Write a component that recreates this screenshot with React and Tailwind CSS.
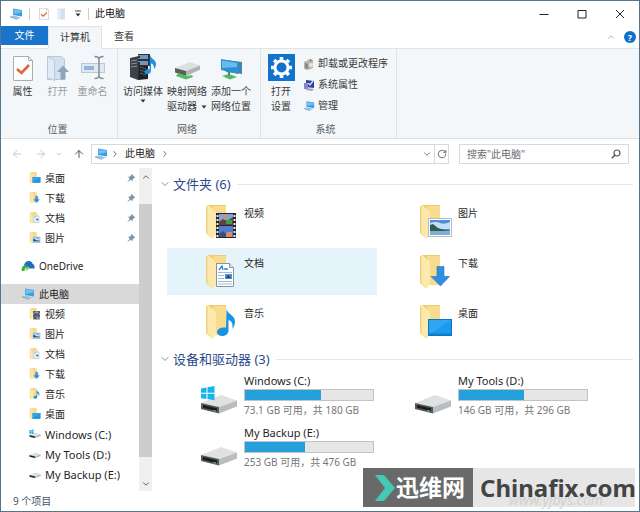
import React, { useState } from "react";
import { ArrowLeft, ArrowRight, ArrowUp, ChevronDown, ChevronRight, ChevronUp, RotateCw } from "lucide-react";

const folders = [
  { name: "视频", kind: "video" },
  { name: "图片", kind: "picture" },
  { name: "文档", kind: "document" },
  { name: "下载", kind: "download" },
  { name: "音乐", kind: "music" },
  { name: "桌面", kind: "desktop" },
];

const drives = [
  { name: "Windows (C:)", free: 73.1, total: 180, system: true },
  { name: "My Tools (D:)", free: 146, total: 296 },
  { name: "My Backup (E:)", free: 253, total: 476 },
];

const pinned = [
  { name: "桌面", kind: "desktop" },
  { name: "下载", kind: "download" },
  { name: "文档", kind: "document" },
  { name: "图片", kind: "picture" },
];

const treeFolders = [
  { name: "视频", kind: "video" },
  { name: "图片", kind: "picture" },
  { name: "文档", kind: "document" },
  { name: "下载", kind: "download" },
  { name: "音乐", kind: "music" },
  { name: "桌面", kind: "desktop" },
];

// what lies in front of the folder, bottom right
const Overlay = ({ kind }) => {
  if (kind === "video") {
    return (
      <g>
        <rect x="11" y="9" width="20" height="25" fill="#23262b" />
        <rect x="14" y="10" width="14" height="11" fill="#7fa2e0" />
        <rect x="14" y="22" width="14" height="11" fill="#4f7dd6" />
        <path d="M14 18l4-3 4 2 6-4v8H14z" fill="#6a3f35" />
        <path d="M21 16h6v4h-6z" fill="#3da043" />
        <path d="M18 11h4v3h-4zM22 28h5v5h-7z" fill="#e58a58" />
        <path d="M14 30l4-3 3 3v3h-7z" fill="#3c4f6f" />
        <path
          d="M11.500 11h2v2h-2zM11.500 15h2v2h-2zM11.500 19h2v2h-2zM11.500 23h2v2h-2zM11.500 27h2v2h-2zM11.500 31h2v2h-2zM28.500 11h2v2h-2zM28.500 15h2v2h-2zM28.500 19h2v2h-2zM28.500 23h2v2h-2zM28.500 27h2v2h-2zM28.500 31h2v2h-2z"
          fill="#e8eaec"
        />
      </g>
    );
  }
  if (kind === "picture") {
    return (
      <g>
        <rect x="9.500" y="14.500" width="23" height="18" fill="#fff" stroke="#b4bdc5" />
        <rect x="11" y="16" width="20" height="15" fill="#4d8fd6" />
        <path d="M11 19q6-2 10 0t10-1v7H11z" fill="#c4dff5" />
        <path d="M11 21l3-1 5 4 6 2 6 1v1H11z" fill="#2d5f50" />
        <path d="M11 27h20v4H11z" fill="#7fb0d0" />
      </g>
    );
  }
  if (kind === "document") {
    return (
      <g>
        <path d="M11.500 9.500h13l4 4v19h-17z" fill="#fff" stroke="#8d9399" />
        <path d="M24.500 9.500v4h4" fill="#e5e8ea" stroke="#8d9399" />
        <path d="M14 16l3-4 1 4M19 15h4" stroke="#2a83cf" strokeWidth="1.300" fill="none" />
        <path d="M13 18.500h14M13 21.500h6M13 24.500h6M13 27.500h14M13 30h14" stroke="#9cb9d6" />
        <path d="M20 20h7v5h-7z" fill="#4791cf" />
        <path d="M21 24l2-3 3 3z" fill="#23405c" />
      </g>
    );
  }
  if (kind === "download") {
    return <path d="M18 12.500h7v10h5.500L21.500 32 12 22.500h6z" fill="#2f8fe0" stroke="#2377c2" strokeWidth=".6" />;
  }
  if (kind === "music") {
    return (
      <path
        d="M21.500 5c1 5 8 6 8.500 12 0 3-1 6-2.500 8 .5-5-.5-8-4-9v10.500c0 4-3.500 5.500-6.500 5.500-3 0-5-1.700-5-4 0-3 4-5 9-4.500z"
        fill="#1c93de"
      />
    );
  }
  return (
    <g>
      <rect x="9.500" y="15.500" width="23" height="16" fill="#1b9bee" stroke="#0f76bd" />
      <path d="M10 16h22L14 28l-4 2z" fill="#45b2f5" opacity=".5" />
      <path d="M10 29.500h22v1.500H10z" fill="#0e7fd0" />
    </g>
  );
};

const FolderIcon = ({ kind, className }) => (
  <svg viewBox="0 0 33 36" className={className} aria-hidden="true">
    <path d="M3 1h18v30H7z" fill="#eecb6d" />
    <path d="M8 2h13v29H8z" fill="#f6dc8c" />
    <path d="M1 2l2-1 6 5q2 2 2 4v20l-3.500 5L1 29z" fill="#fce9ab" />
    <path d="M1 2l1.500 1v26.500L7.500 35 1 29z" fill="#f0d284" />
    <Overlay kind={kind} />
  </svg>
);

const DriveIcon = ({ system, className }) => (
  <svg viewBox="0 0 38 32" className={className} aria-hidden="true">
    <path d="M1 19l20-8 16 5.500L19 23z" fill="#dfe1e2" />
    <path d="M1 19l18 4v6.500L1 25z" fill="#55595b" />
    <path d="M3 21l14 3.200v3L3 23.700z" fill="#191d1c" />
    <path d="M19 23l18-6.500v6L19 29.500z" fill="#b9bdbf" />
    <path d="M13 26.500l3 .7" stroke="#3fc46b" strokeWidth="1.200" />
    {system && (
      <path d="M1 4.500l5.500-1v5.200H1zM7.500 3.300l7-1.300v6.700h-7zM1 9.700h5.500V15L1 14.200zM7.500 9.700h7v6.500l-7-1.100z" fill="#19b5ea" />
    )}
  </svg>
);

const PcIcon = ({ className }) => (
  <svg viewBox="0 0 14 12" className={className} aria-hidden="true">
    <path d="M4 .5l9 1.500v6.500L4 7z" fill="#3c9fe0" />
    <path d="M4.500 1.200l8 1.300v2L4.500 6z" fill="#6fc1f2" />
    <path d="M1 8.500l4-1 7 2-4 1.800z" fill="#9fc4dd" />
    <path d="M1 8.500l7 2.800v.5L1 9.200z" fill="#4c88ae" />
  </svg>
);

const CloudIcon = ({ className }) => (
  <svg viewBox="0 0 14 12" className={className} aria-hidden="true">
    <path d="M3 6.500C3 3 5.500.8 8 1c2 0 3.300 1.400 3.700 3C13 4.500 14 6 13.500 8.500H6z" fill="#1b6fc2" />
    <path d="M1 11c-1-3 .5-5.500 3-5.800C6 5 7 6 7.500 7L4 8.500 3.500 11z" fill="#35b24a" />
    <path d="M4.500 10.500c0-2.500 2-4 4-3.500l-2 3.500z" fill="#9fd45c" />
  </svg>
);

const PinIcon = () => (
  <svg viewBox="0 0 10 10" className="size-2.5" aria-hidden="true">
    <path d="M5.500 .8l3.700 3.700-1 .4L6.800 6.300l-.3 2-1.800-1.600L1 9.500l2.700-3.800L2 4l2-.4 1.300-1.600z" fill="#8195a3" />
  </svg>
);

const CheckPageIcon = ({ className }) => (
  <svg viewBox="0 0 20 25" className={className} aria-hidden="true">
    <path d="M.5.500h15l4 4v20H.5z" fill="#fdfdfd" stroke="#a7adb3" />
    <path d="M15.500.500v4h4" fill="none" stroke="#a7adb3" />
    <path d="M4 13l4.500 4L16 9" fill="none" stroke="#d9693b" strokeWidth="2.600" />
  </svg>
);

const OpenPageIcon = () => (
  <svg viewBox="0 0 24 26" className="h-[26px] w-6" aria-hidden="true">
    <path d="M1.500 1.500h14l3 3v20h-17z" fill="#d3e0f0" stroke="#b7c8de" />
    <path d="M1.500 1.500l7 4v20l-7-3z" fill="#e1eaf5" stroke="#b7c8de" />
    <path d="M17 10.500l6 6.500h-3.500v7.500h-5V17H11z" fill="#8fa3bd" />
  </svg>
);

const RenameIcon = () => (
  <svg viewBox="0 0 26 26" className="size-[26px]" aria-hidden="true">
    <rect x="1.500" y="8.500" width="23" height="9" fill="#dfe8f3" stroke="#b9c8da" />
    <path d="M4 11h10v4H4z" fill="#94b4d8" />
    <path d="M14.500 1.500q4.500 0 4.500 3v16q0 3-4.500 3M23.500 1.500q-4.500 0-4.500 3v16q0 3 4.500 3" fill="none" stroke="#7d8894" strokeWidth="1.400" />
  </svg>
);

const MediaIcon = () => (
  <svg viewBox="0 0 28 28" className="size-7" aria-hidden="true">
    <path d="M1 5l9-2 1 20-2 4-8-3z" fill="#3b4248" />
    <path d="M10 9l9 3v14l-10 1z" fill="#1d2226" />
    <path d="M9 1h12v12H9z" fill="#2c333b" />
    <path d="M11 2h8v4h-8zM11 8h8v4h-8z" fill="#7396bd" />
    <path d="M2 8l6-1M2 11l6-1M2 14l6-1" stroke="#86919b" />
    <path d="M11 14l6 2M11 17l6 2M11 20l6 2" stroke="#59646d" />
    <path d="M9.500 2.500h1M9.500 5.500h1M9.500 8.500h1" stroke="#dfe3e6" />
    <path d="M21 2c1 4 6 4.500 6 9 0 2-1 4-2 5 0-4-1-5-3-5.500v7c0 3-3 4-5 3.500-2-.6-2-4 1-4.500 1-.3 2 0 2.500 0z" fill="#2190df" />
  </svg>
);

const MapDriveIcon = () => (
  <svg viewBox="0 0 28 28" className="size-7" aria-hidden="true">
    <path d="M2 15l15-6 10 3.500-14 5.500z" fill="#dcdedf" />
    <path d="M2 15l11 3v5L2 19.500z" fill="#5a5f60" />
    <path d="M13 18l14-5.500v4.200L13 23z" fill="#aeb3b5" />
    <path d="M3 23l2-3 9 3 5-1 1 2-7 2.500z" fill="#58bb62" />
  </svg>
);

const NetPlaceIcon = () => (
  <svg viewBox="0 0 28 28" className="size-7" aria-hidden="true">
    <path d="M9 7l16 2v12L9 19z" fill="#3f86b4" />
    <path d="M4 6l17 3v12L4 17z" fill="#2e8fd2" />
    <path d="M5 7.500l15 2.500v4L5 15z" fill="#63bdf0" />
    <path d="M5 23l7-2 8 3-7 2.500z" fill="#57b862" />
    <path d="M12 19v3" stroke="#418d52" strokeWidth="2" />
  </svg>
);

const GearIcon = () => (
  <svg viewBox="0 0 27 27" className="size-[27px]" aria-hidden="true">
    <rect width="27" height="27" fill="#1273cc" />
    <circle cx="13.500" cy="13.500" r="6.500" fill="none" stroke="#fff" strokeWidth="3" />
    <g stroke="#fff" strokeWidth="3.600">
      <path d="M13.500 3v3.500M13.500 20.500V24M3 13.500h3.500M20.500 13.500H24" />
      <path d="M6.100 6.100l2.400 2.400M18.500 18.500l2.400 2.400M6.100 20.900l2.400-2.400M18.500 8.500l2.400-2.400" />
    </g>
  </svg>
);

const UninstallIcon = () => (
  <svg viewBox="0 0 12 12" className="size-3" aria-hidden="true">
    <path d="M1 4l6-3 3 1v8l-5 2-4-1z" fill="#b9b6ad" />
    <path d="M2 5l3 1v5l-3-1z" fill="#8a8880" />
    <circle cx="8" cy="7" r="2" fill="#e6e6e0" />
    <path d="M7 1l2 1-2 2z" fill="#6f8a68" />
  </svg>
);

const SystemIcon = () => (
  <svg viewBox="0 0 12 12" className="size-3" aria-hidden="true">
    <path d="M3 1l8 1v7L3 8z" fill="#2c3f9e" />
    <path d="M1 4h4v6H1z" fill="#8a86c4" />
    <path d="M5 4l2 2 3-4" stroke="#cfd8f5" strokeWidth="1.400" fill="none" />
    <path d="M4 9l7 1-2 2-6-1z" fill="#9fa8b5" />
  </svg>
);

const Caret = () => (
  <svg viewBox="0 0 6 4" className="inline-block h-1 w-1.5" aria-hidden="true">
    <path d="M.5.500h5L3 3.500z" fill="#333" />
  </svg>
);

const RibbonGroup = ({ label, children, className }) => (
  <section aria-label={label} className={`flex flex-col justify-between border-r border-[#dfe3e6] ${className}`}>
    <div className="flex pt-1">{children}</div>
    <p className="h-4 text-center text-[#5c5f63]">{label}</p>
  </section>
);

const RibbonButton = ({ icon, lines, disabled, hasMenu, className }) => (
  <button
    type="button"
    disabled={disabled}
    className={`flex flex-col items-center ${disabled ? "text-[#9a9da1]" : "text-[#3b3b3b]"} ${className}`}
  >
    <span className="mb-[3px] flex h-7 items-end">{icon}</span>
    {lines.map((line, i) => (
      <span key={i} className="flex h-[15px] items-center gap-1 whitespace-nowrap">
        {line}
      </span>
    ))}
    {hasMenu && (
      <span className="flex h-1">
        <Caret />
      </span>
    )}
  </button>
);

const SmallRibbonButton = ({ icon, label }) => (
  <button type="button" className="flex h-[21px] items-center gap-[3px] whitespace-nowrap text-[#3b3b3b]">
    {icon}
    {label}
  </button>
);

const TreeRow = ({ icon, label, level = 2, selected, isPinned, large }) => (
  <li>
    <a
      href="#"
      aria-current={selected ? "page" : undefined}
      className={`flex h-5 items-center gap-1 whitespace-nowrap pr-[3px] ${
        level === 1 ? "pl-5" : "pl-[28px]"
      } ${selected ? "bg-[#d9d9d9]" : "hover:bg-[#e5f3fb]"}`}
    >
      {icon}
      <span className={large ? "flex-1 text-[11px]" : "flex-1"}>{label}</span>
      {isPinned && <PinIcon />}
    </a>
  </li>
);

const SectionHeader = ({ title, count }) => (
  <h2 className="flex h-6 items-center text-[13px] text-[#2b4a8b]">
    <button type="button" aria-label={`折叠${title}`} className="mr-0.5 text-[#8a8f96]">
      <ChevronDown className="size-3" />
    </button>
    {title} ({count})
    <span className="ml-1.5 flex-1 border-t border-[#e3e7ec]" />
  </h2>
);

const DriveTile = ({ drive }) => {
  const used = ((drive.total - drive.free) / drive.total) * 100;
  return (
    <button type="button" className="flex h-12 gap-1.5 pl-[33px] text-left hover:bg-[#e5f3fb]">
      <DriveIcon system={drive.system} className="mt-[11px] h-8 w-[38px]" />
      <span className="flex flex-1 flex-col">
        <span className="h-4 text-[11px] leading-4">{drive.name}</span>
        <span className="block h-3 w-[130px] border border-[#c3c3c3] bg-[#e6e6e6]">
          <span className="block h-full bg-[#26a0da]" style={{ width: `${used}%` }} />
        </span>
        <span className="mt-px h-4 whitespace-nowrap leading-4 text-[#767676]">
          {drive.free} GB 可用，共 {drive.total} GB
        </span>
      </span>
    </button>
  );
};

const App = () => {
  const [selected, setSelected] = useState("document");
  const [search, setSearch] = useState("");

  return (
    <div
      lang="zh-CN"
      className="relative flex min-h-screen flex-col border border-[#56748a] bg-white font-['Noto_Sans','Noto_Sans_CJK_SC',sans-serif] text-[10px] leading-[15px] text-[#1f1f1f]"
    >
      {/* title bar */}
      <header className="flex h-[25px] items-center pl-2">
        <PcIcon className="h-3 w-3.5" />
        <span className="mx-1.5 h-3 border-l border-[#c9cdd1]" />
        <button type="button" aria-label="属性" className="ml-[3px]">
          <CheckPageIcon className="h-3 w-2.5" />
        </button>
        <button type="button" aria-label="新建文件夹" className="ml-2">
          <svg viewBox="0 0 9 12" className="h-3 w-[9px]" aria-hidden="true">
            <path d="M.5.500h7.500v11H.5z" fill="#d3e0f0" />
            <path d="M.5.500l3 1.500v9.500h-3z" fill="#e8eff7" />
          </svg>
        </button>
        <button type="button" aria-label="自定义快速访问工具栏" className="ml-2 mr-1.5">
          <svg viewBox="0 0 8 8" className="size-2" aria-hidden="true">
            <path d="M1 1h6" stroke="#444" />
            <path d="M1.500 3.500h5L4 6.500z" fill="#333" />
          </svg>
        </button>
        <span className="h-3 border-l border-[#c9cdd1]" />
        <h1 className="ml-1.5 flex-1 text-[#111]">此电脑</h1>
        <button type="button" aria-label="最小化" className="flex h-full w-[38px] items-center justify-center">
          <svg viewBox="0 0 10 10" className="size-2.5" aria-hidden="true">
            <path d="M.5 5.500h9" stroke="#222" />
          </svg>
        </button>
        <button type="button" aria-label="最大化" className="flex h-full w-[38px] items-center justify-center">
          <svg viewBox="0 0 10 10" className="size-2.5" aria-hidden="true">
            <path d="M1 1.500h8v7.500H1z" fill="none" stroke="#222" />
          </svg>
        </button>
        <button type="button" aria-label="关闭" className="flex h-full w-[38px] items-center justify-center">
          <svg viewBox="0 0 10 10" className="size-2.5" aria-hidden="true">
            <path d="M1 1l8 8M9 1L1 9" stroke="#222" />
          </svg>
        </button>
      </header>

      {/* ribbon tabs */}
      <div className="flex h-[23px] items-start border-b border-[#dfe3e6]">
        <button type="button" className="h-[19px] w-[47px] bg-[#1a74cc] text-white">
          文件
        </button>
        <button type="button" className="h-[23px] w-[54px] border-x border-t border-[#dfe3e6] bg-[#f4f7fa] pb-0.5 text-[#333]">
          计算机
        </button>
        <button type="button" className="h-5 w-11 text-[#333]">
          查看
        </button>
        <div className="ml-auto flex h-[22px] items-center gap-2 pr-[3px]">
          <button type="button" aria-label="最小化功能区">
            <ChevronUp className="size-2.5 text-[#a0a4a8]" />
          </button>
          <button
            type="button"
            aria-label="帮助"
            className="flex size-3 items-center justify-center rounded-full bg-[#0f70c8] text-[9px] font-bold text-white"
          >
            ?
          </button>
        </div>
      </div>

      {/* ribbon */}
      <div className="flex h-[90px] border-b border-[#dcdfe2] bg-[#f4f7fa]">
        <RibbonGroup label="位置" className="pl-1 pr-[7px]">
          <RibbonButton icon={<CheckPageIcon className="h-[25px] w-5" />} lines={["属性"]} className="w-[35px]" />
          <RibbonButton icon={<OpenPageIcon />} lines={["打开"]} disabled className="w-[35px]" />
          <RibbonButton icon={<RenameIcon />} lines={["重命名"]} disabled className="w-[35px]" />
        </RibbonGroup>
        <RibbonGroup label="网络" className="pl-[3px] pr-[7px]">
          <RibbonButton icon={<MediaIcon />} lines={["访问媒体"]} hasMenu className="w-11" />
          <RibbonButton
            icon={<MapDriveIcon />}
            lines={["映射网络", <React.Fragment key="map">驱动器 <Caret /></React.Fragment>]}
            className="w-11"
          />
          <RibbonButton icon={<NetPlaceIcon />} lines={["添加一个", "网络位置"]} className="w-11" />
        </RibbonGroup>
        <RibbonGroup label="系统" className="pl-0.5 pr-2">
          <RibbonButton icon={<GearIcon />} lines={["打开", "设置"]} className="w-9" />
          <div className="flex flex-col pl-1">
            <SmallRibbonButton icon={<UninstallIcon />} label="卸载或更改程序" />
            <SmallRibbonButton icon={<SystemIcon />} label="系统属性" />
            <SmallRibbonButton icon={<PcIcon className="size-3" />} label="管理" />
          </div>
        </RibbonGroup>
      </div>

      {/* address bar */}
      <div className="flex h-[29px] items-center pl-2.5 pr-2.5">
        <button type="button" aria-label="后退" disabled className="text-[#c3c6c9]">
          <ArrowLeft className="size-3" />
        </button>
        <button type="button" aria-label="前进" disabled className="ml-3 text-[#c3c6c9]">
          <ArrowRight className="size-3" />
        </button>
        <button type="button" aria-label="最近浏览的位置" className="ml-2 text-[#a8abae]">
          <ChevronDown className="size-2" />
        </button>
        <button type="button" aria-label="上移" className="ml-2.5 mr-1.5 text-[#555]">
          <ArrowUp className="size-3" />
        </button>
        <nav aria-label="地址" className="flex h-5 flex-1 items-center border border-[#d9d9d9] pl-0.5">
          <PcIcon className="h-3 w-3.5" />
          <ChevronRight className="ml-0.5 size-2.5 text-[#555]" />
          <a href="#" className="ml-[5px] flex-1 text-[#222]">
            此电脑 <ChevronRight className="ml-0.5 inline size-2.5 text-[#555]" />
          </a>
          <button type="button" aria-label="以前的位置" className="mr-0.5 text-[#555]">
            <ChevronDown className="size-2.5" />
          </button>
          <button type="button" aria-label="刷新" className="flex h-full w-3.5 items-center justify-center border-l border-[#d9d9d9] text-[#555]">
            <RotateCw className="size-2.5" />
          </button>
        </nav>
        <div className="ml-2.5 flex h-5 w-[170px] items-center border border-[#d9d9d9] pr-[7px]">
          <input
            type="text"
            aria-label="搜索"
            value={search}
            onChange={(e) => setSearch(e.target.value)}
            placeholder={'搜索"此电脑"'}
            className="h-full min-w-0 flex-1 pl-[7px] leading-[18px] outline-none placeholder:text-[#6d6d6d]"
          />
          <svg viewBox="0 0 10 10" className="size-2.5 text-[#555]" aria-hidden="true">
            <circle cx="6" cy="4" r="3" fill="none" stroke="currentColor" strokeWidth="1.200" />
            <path d="M4 6L.8 9.200" stroke="currentColor" strokeWidth="1.500" />
          </svg>
        </div>
      </div>

      <div className="flex flex-1">
        {/* navigation pane */}
        <nav aria-label="导航窗格" className="w-[138px] shrink-0">
          <ul>
            {pinned.map((item) => (
              <TreeRow key={item.kind} icon={<FolderIcon kind={item.kind} className="size-3" />} label={item.name} isPinned />
            ))}
          </ul>
          <ul className="my-2">
            <TreeRow level={1} icon={<CloudIcon className="h-3 w-3.5" />} label="OneDrive" />
          </ul>
          <ul>
            <TreeRow level={1} icon={<PcIcon className="h-3 w-3.5" />} label="此电脑" selected />
            {treeFolders.map((item) => (
              <TreeRow key={item.kind} icon={<FolderIcon kind={item.kind} className="size-3" />} label={item.name} />
            ))}
            {drives.map((drive) => (
              <TreeRow key={drive.name} icon={<DriveIcon system={drive.system} className="size-3" />} label={drive.name} large />
            ))}
          </ul>
        </nav>
        <div className="flex w-[13px] shrink-0 flex-col items-center bg-[#f0f0f0] text-[#444]">
          <button type="button" aria-label="向上滚动" className="flex h-9 items-start pt-1">
            <ChevronUp className="size-2.5" />
          </button>
          <div className="w-full flex-1 bg-[#cdcdcd]" />
          <button type="button" aria-label="向下滚动" className="flex h-[34px] items-end pb-0.5">
            <ChevronDown className="size-2.5" />
          </button>
        </div>

        {/* content */}
        <main className="min-w-0 flex-1 pl-[7px] pr-1.5 pt-1">
          <SectionHeader title="文件夹" count={folders.length} />
          <div className="mb-0.5 mt-0.5 grid grid-cols-[repeat(auto-fill,210px)] gap-x-1 gap-y-[3px] pl-2">
            {folders.map((folder) => (
              <button
                key={folder.kind}
                type="button"
                onClick={() => setSelected(folder.kind)}
                className={`flex h-[47px] items-start gap-1.5 pl-[38px] pt-1.5 text-left ${
                  selected === folder.kind ? "bg-[#e5f3fb]" : ""
                }`}
              >
                <FolderIcon kind={folder.kind} className="h-9 w-[33px]" />
                <span className="pt-0.5">{folder.name}</span>
              </button>
            ))}
          </div>
          <SectionHeader title="设备和驱动器" count={drives.length} />
          <div className="mt-0.5 grid grid-cols-[repeat(auto-fill,210px)] gap-x-1 gap-y-1 pl-2">
            {drives.map((drive) => (
              <DriveTile key={drive.name} drive={drive} />
            ))}
          </div>
        </main>
      </div>

      <footer className="flex h-5 items-center pl-3 text-[#44536b]">9 个项目</footer>

      {/* site badge over the bottom right corner */}
      <div className="absolute bottom-1 right-1 flex h-[39px] text-[24px] font-bold leading-[39px]">
        <div className="flex w-[110px] items-center bg-[#696969] pl-3 text-white">
          <svg viewBox="0 0 20 26" className="mr-px h-[26px] w-5" aria-hidden="true">
            <path d="M0 0h9l11 13L9 26H0l10-13z" fill="#45c7b3" />
          </svg>
          <span className="whitespace-nowrap text-[23px]">迅维网</span>
        </div>
        <div className="relative w-[162px] bg-[#e6e6e6] pl-[7px] text-[#444]">
          <span className="absolute bottom-0 left-9 text-[14px] font-normal italic leading-[14px] text-[#d2d2d2]">www.yjbys.com</span>
          <span className="relative">Chinafix.com</span>
        </div>
      </div>
    </div>
  );
};

export default App;
